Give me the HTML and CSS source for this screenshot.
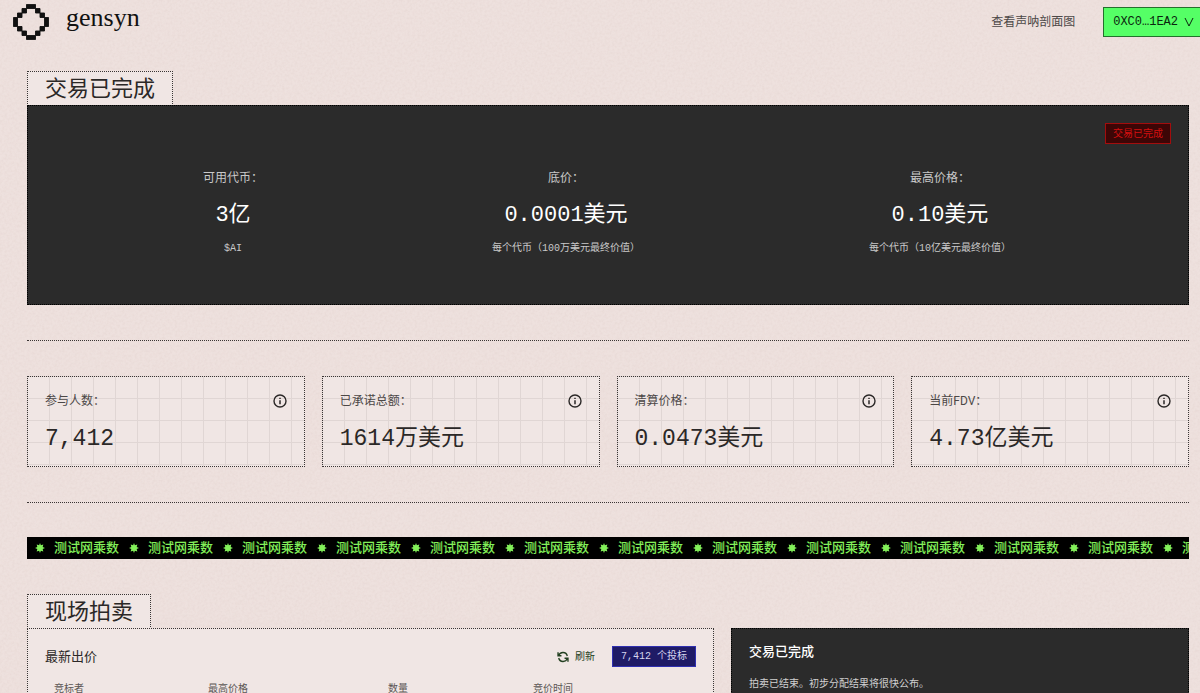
FILE: index.html
```html
<!DOCTYPE html>
<html lang="zh-CN">
<head>
<meta charset="utf-8">
<title>gensyn</title>
<link rel="stylesheet" href="styles.css">
</head>
<body>
<svg class="defs" width="0" height="0" aria-hidden="true">
  <symbol id="info" viewBox="0 0 14 14"><circle cx="7" cy="7" r="6" fill="none" stroke="currentColor" stroke-width="1.4"/><path d="M7 6.3V10.2M7 3.8V5.1" stroke="currentColor" stroke-width="1.5"/></symbol>
  <symbol id="star" viewBox="0 0 10 10"><path d="M5 0l.9 2.2L8.3 1.5 7.7 4 10 5 7.7 6l.6 2.4-2.4-.6L5 10l-.9-2.2-2.4.6L2.3 6 0 5l2.3-1-.6-2.5 2.4.7z" fill="currentColor"/></symbol>
</svg>
<header class="header">
  <a class="brand" href="#">
    <svg class="brand-mark" viewBox="0 0 8 8" aria-hidden="true"><path d="M3 .1h2v.9H3zM2 1h1v1H2zM5 1h1v1H5zM1 2h1v1H1zM6 2h1v1H6zM.1 3H1v2H.1zM7 3h.9v2H7zM1 5h1v1H1zM6 5h1v1H6zM2 6h1v1H2zM5 6h1v1H5zM3 7h2v.9H3z" fill="currentColor" stroke="currentColor" stroke-width=".2"/></svg>
    <span class="brand-name">gensyn</span>
  </a>
  <nav class="nav">
    <a class="nav-link" href="#">查看声呐剖面图</a>
    <button class="wallet" type="button"><span>0XC0…1EA2</span><svg class="chevron" viewBox="0 0 10 10" aria-hidden="true"><path d="M1 1l4 8 4-8" fill="none" stroke="currentColor"/></svg></button>
  </nav>
</header>
<main class="main">
  <section>
    <h1 class="tab">交易已完成</h1>
    <div class="summary">
      <span class="status">交易已完成</span>
      <dl class="offers">
        <div class="offer"><dt>可用代币：</dt><dd class="offer-value">3亿</dd><dd class="offer-note">$AI</dd></div>
        <div class="offer"><dt>底价：</dt><dd class="offer-value">0.0001美元</dd><dd class="offer-note">每个代币（100万美元最终价值）</dd></div>
        <div class="offer"><dt>最高价格：</dt><dd class="offer-value">0.10美元</dd><dd class="offer-note">每个代币（10亿美元最终价值）</dd></div>
      </dl>
    </div>
  </section>
  <section class="metrics">
    <article class="metric"><div class="metric-head"><span>参与人数：</span><button class="info" type="button" aria-label="参与人数说明"><svg><use href="#info"/></svg></button></div><p class="metric-value">7,412</p></article>
    <article class="metric"><div class="metric-head"><span>已承诺总额：</span><button class="info" type="button" aria-label="已承诺总额说明"><svg><use href="#info"/></svg></button></div><p class="metric-value">1614万美元</p></article>
    <article class="metric"><div class="metric-head"><span>清算价格：</span><button class="info" type="button" aria-label="清算价格说明"><svg><use href="#info"/></svg></button></div><p class="metric-value">0.0473美元</p></article>
    <article class="metric"><div class="metric-head"><span>当前FDV：</span><button class="info" type="button" aria-label="当前FDV说明"><svg><use href="#info"/></svg></button></div><p class="metric-value">4.73亿美元</p></article>
  </section>
  <div class="ticker">
    <span class="tick"><svg><use href="#star"/></svg>测试网乘数</span>
    <span class="tick"><svg><use href="#star"/></svg>测试网乘数</span>
    <span class="tick"><svg><use href="#star"/></svg>测试网乘数</span>
    <span class="tick"><svg><use href="#star"/></svg>测试网乘数</span>
    <span class="tick"><svg><use href="#star"/></svg>测试网乘数</span>
    <span class="tick"><svg><use href="#star"/></svg>测试网乘数</span>
    <span class="tick"><svg><use href="#star"/></svg>测试网乘数</span>
    <span class="tick"><svg><use href="#star"/></svg>测试网乘数</span>
    <span class="tick"><svg><use href="#star"/></svg>测试网乘数</span>
    <span class="tick"><svg><use href="#star"/></svg>测试网乘数</span>
    <span class="tick"><svg><use href="#star"/></svg>测试网乘数</span>
    <span class="tick"><svg><use href="#star"/></svg>测试网乘数</span>
    <span class="tick"><svg><use href="#star"/></svg>测试网乘数</span>
  </div>
  <section>
    <h2 class="tab">现场拍卖</h2>
    <div class="auction">
      <div class="bids">
        <div class="bids-head">
          <h3 class="bids-title">最新出价</h3>
          <button class="refresh" type="button"><svg viewBox="0 0 14 14" aria-hidden="true"><path d="M2 5.4A5.2 5.2 0 0 1 12 5.8M12 8.6A5.2 5.2 0 0 1 2 8.2M1.2 1.6v4h4M12.8 12.4v-4h-4" fill="none" stroke="currentColor" stroke-width="1.6"/></svg>刷新</button>
          <span class="count">7,412 个投标</span>
        </div>
        <table class="bid-table">
          <colgroup><col class="col-bidder"><col class="col-price"><col class="col-amount"><col></colgroup>
          <thead><tr><th>竞标者</th><th>最高价格</th><th>数量</th><th>竞价时间</th></tr></thead>
        </table>
      </div>
      <aside class="notice">
        <h3 class="notice-title">交易已完成</h3>
        <p class="notice-text">拍卖已结束。初步分配结果将很快公布。</p>
      </aside>
    </div>
  </section>
</main>
</body>
</html>
```
FILE: styles.css
```css
:root {
  --ink: #2b2827;
  --dark: #2b2b2b;
  --line: #3a3534;
  --card: #f0e6e4;
  --sans: Roboto, "Noto Sans CJK SC", sans-serif;
  --mono: "Liberation Mono", "Noto Sans CJK SC", monospace;
}
* { box-sizing: border-box; }
body {
  margin: 0;
  overflow-x: hidden;
  color: var(--ink);
  background-color: #eee1de;
  background-image: url("data:image/svg+xml,%3Csvg xmlns='http://www.w3.org/2000/svg' width='240' height='240'%3E%3Cfilter id='n'%3E%3CfeTurbulence type='fractalNoise' baseFrequency='.4' numOctaves='2' stitchTiles='stitch'/%3E%3CfeColorMatrix values='0 0 0 0 .5 0 0 0 0 .35 0 0 0 0 .32 .18 0 0 0 -.06'/%3E%3C/filter%3E%3Crect width='240' height='240' filter='url(%23n)'/%3E%3C/svg%3E");
  font-family: var(--sans);
  font-size: 12px;
  line-height: 18px;
}
h1, h2, h3, p, dl, dd { margin: 0; font-weight: 400; }
button { margin: 0; font: inherit; color: inherit; cursor: pointer; }
.defs { display: block; height: 0; }
.header { display: flex; align-items: center; justify-content: space-between; height: 43px; padding-left: 13px; }
.brand { display: flex; align-items: center; gap: 17px; color: #111; text-decoration: none; }
.brand-mark { width: 36px; height: 36px; }
.brand-name { padding-bottom: 8px; font-family: "Liberation Serif", serif; font-size: 26px; line-height: 30px; }
.nav { display: flex; align-items: center; gap: 28px; }
.nav-link { color: #4c4847; text-decoration: none; }
.wallet { display: flex; align-items: center; gap: 6px; height: 30px; padding: 0 6px 0 9px; border: 1px solid #23702c; border-right: 0; background: #55ff66; color: #0b260e; font-family: var(--mono); font-size: 12px; }
.chevron { width: 10px; height: 10px; }
.main { padding: 28px 11px 0 27px; }
.tab { width: fit-content; height: 35px; margin-bottom: -1px; padding: 0 17px; border: 1px dotted var(--line); background: var(--card); font-size: 22px; line-height: 34px; }
.summary { height: 200px; padding: 17px; border: 1px dotted #000; background: var(--dark); color: #fff; }
.status { display: block; width: fit-content; margin-left: auto; padding: 0 7px; border: 1px solid #a30d0d; background: #3d0606; color: #d40f0f; font-size: 10px; line-height: 19px; }
.offers { display: flex; justify-content: space-between; padding: 25px 160px 0 158px; text-align: center; color: #c9c9c9; }
.offer-value { margin: 13px 0 9px; font-family: var(--mono); font-size: 22px; line-height: 32px; color: #fff; }
.offer-note { font-family: var(--mono); font-size: 10px; line-height: 16px; }
.metrics { display: grid; grid-template-columns: repeat(4, 1fr); gap: 17px; margin: 35px 0 34px; padding: 35px 0; border: dotted var(--line); border-width: 1px 0; }
.metric { height: 91px; padding: 15px 17px; border: 1px dotted var(--line); background-color: var(--card); background-image: linear-gradient(90deg, transparent 21px, #e0d6d4 21px), linear-gradient(transparent 21px, #e0d6d4 21px); background-size: 22px 22px; }
.metric-head { display: flex; align-items: center; justify-content: space-between; color: #4c4847; }
.info { display: flex; padding: 0; border: 0; background: none; color: var(--ink); }
.info svg { width: 14px; height: 14px; }
.metric-value { margin-top: 12px; font-family: var(--mono); font-size: 23px; line-height: 34px; }
.ticker { display: flex; overflow: hidden; margin-bottom: 35px; padding-left: 8px; background: #000; color: #83f05a; }
.tick { display: flex; flex: none; align-items: center; gap: 9px; width: 94px; font-size: 13px; font-weight: 500; line-height: 22px; white-space: nowrap; }
.tick svg { flex: none; width: 10px; height: 10px; }
.auction { display: grid; grid-template-columns: 3fr 2fr; gap: 17px; }
.bids { height: 200px; padding: 17px; border: 1px dotted var(--line); background: var(--card); }
.bids-head { display: flex; align-items: center; }
.bids-title { margin-right: auto; font-size: 13px; }
.refresh { display: flex; align-items: center; gap: 6px; padding: 0; border: 0; background: none; color: #234021; font-size: 10px; }
.refresh svg { width: 12px; height: 12px; }
.count { margin-left: 17px; padding: 0 8px; border: 1px solid #2f2fb0; background: #1f1b66; color: #d5d5ee; font-family: var(--mono); font-size: 10px; line-height: 19px; }
.bid-table { width: 100%; margin-top: 13px; border-collapse: collapse; table-layout: fixed; color: #5c5655; font-size: 10px; line-height: 18px; }
.bid-table th { padding: 0 9px; text-align: left; font-weight: 400; }
.col-bidder { width: 154px; }
.col-price { width: 180px; }
.col-amount { width: 145px; }
.notice { padding: 14px 17px; border: 1px dotted #000; background: var(--dark); color: #fff; }
.notice-title { font-size: 13px; font-weight: 500; }
.notice-text { margin-top: 15px; color: #d0d0d0; font-size: 10px; line-height: 16px; }
```
